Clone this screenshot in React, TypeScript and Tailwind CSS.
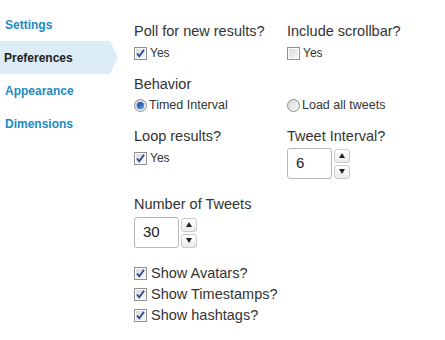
import type { ReactNode } from 'react';

const font = { fontFamily: '"Liberation Sans", Arial, sans-serif' };

const navItems = ['Settings', 'Preferences', 'Appearance', 'Dimensions'];

function CheckBox({ checked }: { checked: boolean }) {
  return (
    <span className="relative inline-flex h-[13px] w-[13px] shrink-0 items-center justify-center border border-[#8e8f8f] bg-white">
      <span className="absolute inset-[1px] bg-gradient-to-br from-[#dcdcdc] to-[#f6f6f6]" />
      {checked && (
        <svg viewBox="0 0 11 11" className="relative h-[11px] w-[11px]">
          <path d="M2 5.5 L4.3 8.2 L9 1.8" fill="none" stroke="#2a4b9b" strokeWidth="1.9" />
        </svg>
      )}
    </span>
  );
}

function Radio({ checked }: { checked: boolean }) {
  return (
    <span className="inline-flex h-[13px] w-[13px] shrink-0 items-center justify-center rounded-full border border-[#8e8f8f] bg-gradient-to-br from-[#d8d8d8] to-[#f8f8f8]">
      {checked && (
        <span className="h-[7px] w-[7px] rounded-full bg-gradient-to-br from-[#1f3f8f] to-[#5aa0e8] shadow-[0_0_1px_#0a2a6a]" />
      )}
    </span>
  );
}

function SmallCheck({ checked, label }: { checked: boolean; label: string }) {
  return (
    <div className="flex h-[16px] items-center gap-[3px] text-[12px] text-[#333]">
      <CheckBox checked={checked} />
      <span>{label}</span>
    </div>
  );
}

function Label({ children }: { children: ReactNode }) {
  return <div className="text-[14.5px] leading-[17px] text-[#333]">{children}</div>;
}

function Spinner({ value }: { value: string }) {
  return (
    <div className="flex items-center gap-[2px]">
      <div className="flex h-[31px] w-[45px] items-center rounded-[3px] border border-[#b6b6b6] bg-white pl-[8px] text-[15px] text-[#222]">
        {value}
      </div>
      <div className="flex flex-col gap-[2px]">
        <button className="flex h-[14px] w-[16px] items-center justify-center rounded-[3px] border border-[#cacaca] bg-gradient-to-b from-white to-[#ececec]">
          <svg viewBox="0 0 6 5" className="h-[5px] w-[6px]">
            <path d="M3 0 L6 5 L0 5 Z" fill="#222" />
          </svg>
        </button>
        <button className="flex h-[14px] w-[16px] items-center justify-center rounded-[3px] border border-[#cacaca] bg-gradient-to-b from-white to-[#ececec]">
          <svg viewBox="0 0 6 5" className="h-[5px] w-[6px]">
            <path d="M0 0 L6 0 L3 5 Z" fill="#222" />
          </svg>
        </button>
      </div>
    </div>
  );
}

export default function App() {
  return (
    <div className="flex h-[340px] w-[445px] bg-white" style={font}>
      <nav className="flex w-[120px] shrink-0 flex-col pt-[8px]">
        {navItems.map((item) =>
          item === 'Preferences' ? (
            <div
              key={item}
              className="flex h-[33px] w-[118px] items-center bg-[#dcedf7] pl-[4px] text-[12px] font-bold text-[#222] [clip-path:polygon(0_0,110px_0,118px_50%,110px_100%,0_100%)]"
            >
              {item}
            </div>
          ) : (
            <a key={item} className="flex h-[33px] items-center pl-[5px] text-[12px] font-bold text-[#1b8bc3]">
              {item}
            </a>
          ),
        )}
      </nav>

      <main className="flex flex-1 flex-col pl-[14px] pt-[23px]">
        <div className="grid grid-cols-[153px_1fr]">
          <div className="flex flex-col gap-[5px]">
            <Label>Poll for new results?</Label>
            <SmallCheck checked label="Yes" />
          </div>
          <div className="flex flex-col gap-[5px]">
            <Label>Include scrollbar?</Label>
            <SmallCheck checked={false} label="Yes" />
          </div>
        </div>

        <div className="mt-[15px] flex flex-col gap-[4px]">
          <Label>Behavior</Label>
          <div className="grid grid-cols-[153px_1fr] text-[12.5px] text-[#333]">
            <div className="flex h-[16px] items-center gap-[2px]">
              <Radio checked />
              <span>Timed Interval</span>
            </div>
            <div className="flex h-[16px] items-center gap-[2px]">
              <Radio checked={false} />
              <span>Load all tweets</span>
            </div>
          </div>
        </div>

        <div className="mt-[15px] grid grid-cols-[153px_1fr]">
          <div className="flex flex-col gap-[5px]">
            <Label>Loop results?</Label>
            <SmallCheck checked label="Yes" />
          </div>
          <div className="flex flex-col gap-[3px]">
            <Label>Tweet Interval?</Label>
            <Spinner value="6" />
          </div>
        </div>

        <div className="mt-[17px] flex flex-col gap-[4px]">
          <Label>Number of Tweets</Label>
          <Spinner value="30" />
        </div>

        <div className="mt-[15px] flex flex-col">
          {['Show Avatars?', 'Show Timestamps?', 'Show hashtags?'].map((t) => (
            <div key={t} className="flex h-[21px] items-center gap-[4px] text-[14.5px] text-[#333]">
              <CheckBox checked />
              <span>{t}</span>
            </div>
          ))}
        </div>
      </main>
    </div>
  );
}
